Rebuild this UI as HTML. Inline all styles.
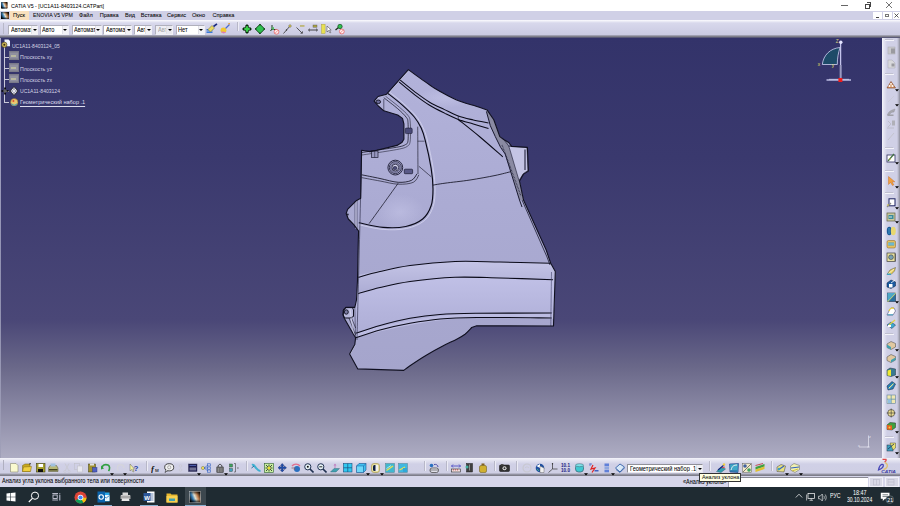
<!DOCTYPE html>
<html><head><meta charset="utf-8">
<style>
*{margin:0;padding:0;box-sizing:border-box}
html,body{width:900px;height:506px;overflow:hidden;background:#fff;font-family:"Liberation Sans",sans-serif;}
.a{position:absolute}
#title{left:0;top:0;width:900px;height:11px;background:#fff}
#menu{left:0;top:11px;width:900px;height:9px;background:#d0d0e6}
#tb{left:0;top:20px;width:900px;height:18px;background:linear-gradient(#fbfbfe 0px,#f0f0f8 1px,#d8d8ec 3px,#d0d0e6 10px,#cbcbe2 14.5px,#9c9cac 15.6px,#76767f 16.8px,#5a5a78 17.5px,#3c3c6c 18px)}
#vp{left:0;top:38px;width:882px;height:420px;background:linear-gradient(#33336a 0px,#3a396e 119px,#4a4777 282px,#6a6889 329px,#aeadc3 420px)}
#rtb{left:882px;top:37.5px;width:18px;height:420.5px;background:linear-gradient(90deg,#f4f4fa 0px,#e4e4f2 2px,#d0d0e6 5px,#d0d0e6 15px,#a8a8b8 17px,#8a8a96 18px)}
#btb{left:0;top:458px;width:900px;height:18px;background:linear-gradient(#f4f4fa 0px,#e6e6f2 2px,#d0d0e6 6px,#cfcfe4 15px,#9c9cac 16px,#74747e 18px)}
#stat{left:0;top:476px;width:900px;height:11px;background:#d6d6ea}
#task{left:0;top:487px;width:900px;height:19px;background:#1f2b32}
.t{position:absolute;white-space:nowrap;line-height:1;color:#000;font-size:5.6px;-webkit-text-stroke:0.04px currentColor}
</style></head><body>
<div id="title" class="a"></div>
<div id="menu" class="a"></div>
<div id="tb" class="a"></div>
<div id="vp" class="a"></div>
<div id="rtb" class="a"></div>
<div class="a" style="left:0;top:38px;width:1px;height:420px;background:linear-gradient(#a8a8c8,#9090b0 60%,#a0a0b8)"></div>
<div id="btb" class="a"></div>
<div id="stat" class="a"></div>
<div id="task" class="a"></div>
<!--CHROME-->
<!-- title bar -->
<svg class="a" style="left:1.4px;top:2px" width="6.6" height="6.5" viewBox="0 0 10 10"><defs><linearGradient id="cic" x1="0" y1="0.7" x2="1" y2="0.3"><stop offset="0" stop-color="#000"/><stop offset="0.3" stop-color="#3a80b8"/><stop offset="0.5" stop-color="#e0e0d0"/><stop offset="0.72" stop-color="#c08050"/><stop offset="1" stop-color="#100800"/></linearGradient><linearGradient id="cic2" x1="0" y1="0" x2="0" y2="1"><stop offset="0" stop-color="#000" stop-opacity="0.6"/><stop offset="0.3" stop-color="#000" stop-opacity="0"/><stop offset="0.7" stop-color="#000" stop-opacity="0"/><stop offset="1" stop-color="#000" stop-opacity="0.8"/></linearGradient></defs><rect width="10" height="10" rx="1" fill="url(#cic)"/><rect width="10" height="10" rx="1" fill="url(#cic2)"/></svg>
<div class="t" style="left:11px;top:3.5px;font-size:5.9px;color:#000;transform:scaleX(0.89);transform-origin:0 0">CATIA V5 - [UC1A11-8403124.CATPart]</div>
<div class="a" style="left:841px;top:5px;width:7px;height:1px;background:#666"></div>
<div class="a" style="left:864.5px;top:3.5px;width:5px;height:5px;border:0.8px solid #444"></div>
<div class="a" style="left:866.5px;top:1.8px;width:4.8px;height:4.8px;border-top:0.8px solid #444;border-right:0.8px solid #444"></div>
<svg class="a" style="left:885px;top:1px" width="8" height="8" viewBox="0 0 8 8"><path d="M1,1 L7,7 M7,1 L1,7" stroke="#444" stroke-width="0.75"/></svg>
<!-- menu bar -->
<svg class="a" style="left:1px;top:12px" width="8" height="7" viewBox="0 0 10 10" preserveAspectRatio="none"><rect width="10" height="10" fill="url(#cic)"/><rect width="10" height="10" fill="url(#cic2)"/></svg>
<div class="a" style="left:10px;top:11px;width:19px;height:9px;background:#f9e0bd"></div>
<div class="t" style="left:13px;top:13.2px;color:#000">Пуск</div>
<div class="t" style="left:32.5px;top:13.2px;color:#000;transform:scaleX(0.93);transform-origin:0 0">ENOVIA V5 VPM</div>
<div class="t" style="left:79px;top:13.2px;color:#000">Файл</div>
<div class="t" style="left:99.7px;top:13.2px;color:#000">Правка</div>
<div class="t" style="left:125px;top:13.2px;color:#000">Вид</div>
<div class="t" style="left:140.8px;top:13.2px;color:#000">Вставка</div>
<div class="t" style="left:167px;top:13.2px;color:#000">Сервис</div>
<div class="t" style="left:192px;top:13.2px;color:#000">Окно</div>
<div class="t" style="left:212.5px;top:13.2px;color:#000">Справка</div>
<div class="a" style="left:873px;top:12px;width:9px;height:7px;background:#fff"></div>
<div class="a" style="left:876px;top:17px;width:3px;height:1px;background:#444"></div>
<div class="a" style="left:883px;top:12px;width:9px;height:7px;background:#fff"></div>
<div class="a" style="left:885px;top:14px;width:4px;height:3px;border:1px solid #777"></div>
<div class="a" style="left:893px;top:12px;width:7px;height:7px;background:#fff"></div>
<svg class="a" style="left:894px;top:13px" width="5" height="5" viewBox="0 0 5 5"><path d="M0.5,0.5 L4.5,4.5 M4.5,0.5 L0.5,4.5" stroke="#333" stroke-width="0.8"/></svg>
<!-- toolbar -->
<div class="a" style="left:3px;top:23px;width:1px;height:11px;background:#b8b8c8"></div>
<style>
.cb{position:absolute;top:24.5px;height:10px;background:#fff;border:1px solid #b0b0bc;border-right-color:#f0f0f6;border-bottom-color:#f0f0f6}
.cb i{position:absolute;right:0;top:0;width:6px;height:8px;background:#f2f2f6;border-left:1px solid #e0e0e8}
.cb i:after{content:"";position:absolute;left:0.5px;top:3px;border-left:2.5px solid transparent;border-right:2.5px solid transparent;border-top:2.5px solid #000}
.cb b{position:absolute;left:1.5px;top:1.2px;font-weight:normal;font-size:6.5px;line-height:1;color:#000;-webkit-text-stroke:0.04px #000;white-space:nowrap;overflow:hidden;transform:scaleX(0.87);transform-origin:0 0}
</style>
<div class="cb" style="left:8px;width:30px"><b style="width:25px">Автомат</b><i></i></div>
<div class="cb" style="left:39.5px;width:29px"><b style="width:25px">Авто</b><i></i></div>
<div class="cb" style="left:71.5px;width:30px"><b style="width:25px">Автомат</b><i></i></div>
<div class="cb" style="left:103px;width:29px"><b style="width:25px">Автомат</b><i></i></div>
<div class="cb" style="left:134px;width:18px"><b style="width:12px">Авто</b><i></i></div>
<div class="cb" style="left:155px;width:18px;background:#eeeef4"><b style="width:12px;color:#aaa">Авто</b><i style="background:#e8e8ee"></i></div>
<div class="cb" style="left:175.5px;width:29px"><b style="width:25px">Нет</b><i></i></div>
<svg class="a" style="left:206px;top:23px" width="12" height="11" viewBox="0 0 12 11">
<rect x="0.5" y="6" width="6" height="1.6" fill="#3a7ad8"/><rect x="0.5" y="8.4" width="6" height="1.6" fill="#3a7ad8"/>
<path d="M2,6.5 L6,2.5 L8.5,5 L4.5,9 Z" fill="#e8d860" stroke="#6a6a30" stroke-width="0.5"/>
<path d="M7.5,3.5 L11,0.8" stroke="#1a2a80" stroke-width="1.6"/></svg>
<svg class="a" style="left:220px;top:23px" width="11" height="11" viewBox="0 0 11 11">
<path d="M5,6 L9.5,1.5" stroke="#4a6ad0" stroke-width="1.2"/><path d="M8,1 L10,0.5" stroke="#e0a040" stroke-width="1"/>
<circle cx="3.5" cy="7.3" r="2.9" fill="#f2c830"/><path d="M1,8.5 A2.9,2.9 0 0 0 6,9" fill="#d878c0"/></svg>
<div class="a" style="left:237px;top:22px;width:1px;height:9px;background:#b8b8c8"></div>
<div class="a" style="left:238px;top:22px;width:1px;height:9px;background:#ececf6"></div>
<svg class="a" style="left:242px;top:23.5px" width="10" height="10" viewBox="0 0 10 10"><path d="M5,1.5 L5,8.5 M1.5,5 L8.5,5" stroke="#062a08" stroke-width="3.2"/><path d="M5,2 L5,8 M2,5 L8,5" stroke="#38d048" stroke-width="2"/><path d="M5,0 L7,2.3 L3,2.3 Z M5,10 L7,7.7 L3,7.7 Z M0,5 L2.3,3 L2.3,7 Z M10,5 L7.7,3 L7.7,7 Z" fill="#062a08"/></svg>
<svg class="a" style="left:255px;top:23.5px" width="10" height="10" viewBox="0 0 10 10"><path d="M5,0.3 L9.7,5 L5,9.7 L0.3,5 Z" fill="#30c050" stroke="#0a3a10" stroke-width="0.9"/><circle cx="5" cy="0.8" r="0.8" fill="#0a3a10"/><circle cx="9.2" cy="5" r="0.8" fill="#0a3a10"/><circle cx="5" cy="9.2" r="0.8" fill="#0a3a10"/><circle cx="0.8" cy="5" r="0.8" fill="#0a3a10"/></svg>
<svg class="a" style="left:270px;top:23.5px" width="10" height="11" viewBox="0 0 10 11"><path d="M2,1 L2,5 L7,6 M2,5 L0.5,7" stroke="#1a3a1a" stroke-width="1" fill="none"/><path d="M1,4 L4,3 L4,6 Z" fill="#50c060"/><circle cx="6.5" cy="7.8" r="2.4" fill="#fff0f0" stroke="#e85858" stroke-width="0.7"/><path d="M4.9,9.4 L8.1,6.2" stroke="#e85858" stroke-width="0.6"/></svg>
<svg class="a" style="left:283px;top:24px" width="9" height="10" viewBox="0 0 9 10"><path d="M0.5,9.5 L7,2" stroke="#333" stroke-width="0.8"/><path d="M5.5,2 L7,0.5 L8.5,2 L7,3.5 Z" fill="#d8c840" stroke="#555" stroke-width="0.5"/><circle cx="3.5" cy="6" r="0.7" fill="#333"/></svg>
<svg class="a" style="left:296px;top:24px" width="9" height="10" viewBox="0 0 9 10"><path d="M0.5,3.5 L6,9" stroke="#333" stroke-width="0.8"/><path d="M4.5,9.3 L6.5,9.3 L6.5,7.3" stroke="#333" stroke-width="0.7" fill="none"/><rect x="4" y="1.2" width="4.5" height="1.5" fill="#b8b060"/></svg>
<svg class="a" style="left:308px;top:24px" width="10" height="10" viewBox="0 0 10 10"><rect x="5" y="1" width="4" height="2.2" fill="#a8a040" stroke="#555" stroke-width="0.4"/><path d="M0.5,6 L9.5,6" stroke="#333" stroke-width="0.9"/><path d="M2,4.6 L0.5,6 L2,7.4 M8,4.6 L9.5,6 L8,7.4" stroke="#333" stroke-width="0.7" fill="none"/></svg>
<svg class="a" style="left:320.5px;top:24px" width="11" height="10" viewBox="0 0 11 10"><rect x="0.5" y="0.3" width="3.6" height="9.2" fill="#e8e050" stroke="#a09830" stroke-width="0.4"/><path d="M6,2 L6,8 L7.5,6.5 L9,9 L9.8,8.5 L8.5,6 L10.2,6 Z" fill="#fff" stroke="#333" stroke-width="0.5"/></svg>
<svg class="a" style="left:335px;top:24px" width="10" height="11" viewBox="0 0 10 11"><path d="M0.5,6 L3.5,3.5" stroke="#1a2a1a" stroke-width="1.2"/><circle cx="5" cy="2.5" r="2.2" fill="#30c050" stroke="#0a3a10" stroke-width="0.6"/><circle cx="6.8" cy="7.5" r="2.4" fill="#fff0f0" stroke="#e85858" stroke-width="0.7"/><path d="M5.2,9.1 L8.4,5.9" stroke="#e85858" stroke-width="0.6"/></svg>
<!-- tree -->
<div class="a" style="left:4px;top:47px;width:1px;height:56px;background:#c8c8d8"></div>
<div class="a" style="left:4px;top:57px;width:5px;height:1px;background:#c8c8d8"></div>
<div class="a" style="left:4px;top:68px;width:5px;height:1px;background:#c8c8d8"></div>
<div class="a" style="left:4px;top:79px;width:5px;height:1px;background:#c8c8d8"></div>
<div class="a" style="left:4px;top:91px;width:5px;height:1px;background:#c8c8d8"></div>
<div class="a" style="left:4px;top:102px;width:5px;height:1px;background:#c8c8d8"></div>
<svg class="a" style="left:1px;top:38.5px" width="10" height="10" viewBox="0 0 10 10"><path d="M3.5,0.5 L7.5,0.5 L9,2 L9,7.3 L3.5,7.3 Z" fill="#f0f4ff"/><circle cx="3.3" cy="5.8" r="2.7" fill="#c8b458" stroke="#302810" stroke-width="0.5"/><circle cx="3.3" cy="5.8" r="1" fill="#403010"/></svg>
<div class="t" style="left:11.7px;top:42.6px;color:#d4d4e4;-webkit-text-stroke:0;font-size:6px;transform:scaleX(0.83);transform-origin:0 0">UC1A11-8403124_05</div>
<svg class="a" style="left:9px;top:51px" width="10" height="9" viewBox="0 0 10 9"><rect x="0" y="0" width="10" height="9" fill="#7a7a8a"/><rect x="1" y="1.5" width="8" height="6" fill="#9090a0"/><rect x="2" y="4" width="5" height="2" fill="#b8b8a0"/></svg>
<div class="t" style="left:20px;top:54.3px;color:#d4d4e4;-webkit-text-stroke:0;font-size:6px;transform:scaleX(0.87);transform-origin:0 0">Плоскость xy</div>
<svg class="a" style="left:9px;top:62.5px" width="10" height="9" viewBox="0 0 10 9"><rect x="0" y="0" width="10" height="9" fill="#7a7a8a"/><rect x="1" y="1.5" width="8" height="6" fill="#9090a0"/><rect x="2" y="4" width="5" height="2" fill="#b8b8a0"/></svg>
<div class="t" style="left:20px;top:65.6px;color:#d4d4e4;-webkit-text-stroke:0;font-size:6px;transform:scaleX(0.87);transform-origin:0 0">Плоскость yz</div>
<svg class="a" style="left:9px;top:74px" width="10" height="9" viewBox="0 0 10 9"><rect x="0" y="0" width="10" height="9" fill="#7a7a8a"/><rect x="1" y="1.5" width="8" height="6" fill="#9090a0"/><rect x="2" y="4" width="5" height="2" fill="#b8b8a0"/></svg>
<div class="t" style="left:20px;top:77px;color:#d4d4e4;-webkit-text-stroke:0;font-size:6px;transform:scaleX(0.87);transform-origin:0 0">Плоскость zx</div>
<svg class="a" style="left:1px;top:86px" width="18" height="10" viewBox="0 0 18 10"><path d="M4,1.5 L4,8.5 M0.5,5 L7.5,5" stroke="#000" stroke-width="1.6"/><path d="M4,3 L4,7 M2,5 L6,5" stroke="#e0e0e0" stroke-width="0.5"/><path d="M13,0.5 L17,5 L13,9.5 L9,5 Z" fill="#b0b0c0" stroke="#222" stroke-width="0.8"/><path d="M11,3 L15,7 M15,3 L11,7" stroke="#fff" stroke-width="0.7"/></svg>
<div class="t" style="left:20px;top:88.4px;color:#d4d4e4;-webkit-text-stroke:0;font-size:6px;transform:scaleX(0.84);transform-origin:0 0">UC1A11-8403124</div>
<svg class="a" style="left:10px;top:97.5px" width="8.5" height="8.5" viewBox="0 0 10 10"><circle cx="5" cy="5" r="4.3" fill="#e8c870" stroke="#906020" stroke-width="0.6"/><path d="M1.5,6 Q5,10 8.5,6 L8,8 Q5,10 2,8 Z" fill="#40a0c0"/><circle cx="4" cy="3.5" r="1.2" fill="#e05030"/></svg>
<div class="t" style="left:20px;top:99.4px;color:#dcdcec;-webkit-text-stroke:0;font-size:6px;border-bottom:0.6px solid #dcdcec;padding-bottom:0.2px;transform:scaleX(0.93);transform-origin:0 0">Геометрический набор .1</div>
<!-- compass -->
<svg class="a" style="left:812px;top:38px" width="45" height="48" viewBox="812 38 45 48">
<path d="M822.3,64.5 C823.5,55 830,48.5 840,47.5 C838.3,53 837.3,58 837.3,64.5 Z" fill="#1d4a68" stroke="#d0d0f4" stroke-width="0.8"/>
<path d="M840.6,42 L840.6,79" stroke="#c4c4ec" stroke-width="1.3"/>
<path d="M840.6,65 L840.6,79" stroke="#9a9ac0" stroke-width="1.8"/>
<circle cx="840.8" cy="42.2" r="1.7" fill="#e4e4ff"/>
<path d="M826.5,80 L851,80" stroke="#b4b4dc" stroke-width="1.6"/>
<path d="M829,79.3 L849,79.3" stroke="#e0e0fa" stroke-width="0.6"/>
<rect x="838.4" y="78" width="4" height="4" fill="#ee1c1c"/>
<text x="835.8" y="43.2" font-size="4.6" fill="#d8d080" font-family="Liberation Sans">Z</text>
<text x="817.8" y="65.5" font-size="4.8" fill="#e8e060" font-family="Liberation Sans">x</text>
<text x="831.8" y="67.2" font-size="4.8" fill="#e8e060" font-family="Liberation Sans">y</text>
</svg>
<!-- small axis bottom right -->
<svg class="a" style="left:857px;top:433.5px" width="14" height="16" viewBox="0 0 14 16"><path d="M11.5,1.5 L11.5,13 L2,13" stroke="#e8e8f4" stroke-width="0.7" fill="none"/><path d="M10.5,12 L12.5,14 M12.5,12 L10.5,14" stroke="#e8e8f4" stroke-width="0.5"/><text x="12" y="4" font-size="3.5" fill="#e8e8f4" font-family="Liberation Sans">z</text><text x="1" y="12.5" font-size="3.5" fill="#e8e8f4" font-family="Liberation Sans">x</text></svg>
<!-- right toolbar -->
<div class="a" style="left:885px;top:39px;width:8px;height:1px;background:#c0c0d0"></div><div class="a" style="left:885px;top:40px;width:9px;height:1px;background:#f4f4fa"></div>
<svg class="a" style="left:886px;top:45.5px" width="11" height="10" viewBox="0 0 11 10"><rect x="2" y="1" width="7" height="7" fill="#c8c8cc" stroke="#a8a8b0" stroke-width="0.5"/><rect x="5" y="2.5" width="4" height="5" fill="#9a9aa0"/></svg>
<svg class="a" style="left:886px;top:58.5px" width="11" height="10" viewBox="0 0 11 10"><path d="M2,1 L6,1 L9,4 L9,9 L2,9 Z" fill="#d8d8dc" stroke="#a8a8b0" stroke-width="0.5"/><rect x="5.5" y="4.5" width="3" height="3" fill="#9a9aa0"/></svg>
<div class="a" style="left:885px;top:72.5px;width:8px;height:1px;background:#c0c0d0"></div><div class="a" style="left:885px;top:73.5px;width:9px;height:1px;background:#f4f4fa"></div>
<svg class="a" style="left:886px;top:79.5px" width="11" height="10" viewBox="0 0 11 10"><path d="M1,8 L5,1.5 L9.5,8 Z" fill="#d89868" stroke="#804020" stroke-width="0.6"/><circle cx="3.5" cy="6" r="1" fill="#fff"/><circle cx="6.5" cy="6" r="1" fill="#fff"/><circle cx="5" cy="3.8" r="0.9" fill="#fff"/></svg>
<svg class="a" style="left:895px;top:89.0px" width="4" height="3" viewBox="0 0 4 3"><path d="M0,0.3 L4,0.3 L2,2.5 Z" fill="#000"/></svg>
<svg class="a" style="left:886px;top:94px" width="11" height="10" viewBox="0 0 11 10"><path d="M2,8 L8,2" stroke="#c8c8d0" stroke-width="0.6"/></svg>
<svg class="a" style="left:895px;top:103.5px" width="4" height="3" viewBox="0 0 4 3"><path d="M0,0.3 L4,0.3 L2,2.5 Z" fill="#000"/></svg>
<svg class="a" style="left:886px;top:106.5px" width="11" height="10" viewBox="0 0 11 10"><path d="M1.5,8 C2,5 5,3 9,2 L8,5 C6,5 4,6 3.5,8 Z" fill="#a8a8b0" stroke="#909098" stroke-width="0.4"/><rect x="1.5" y="7.5" width="6" height="1.5" fill="#a0a0a8"/></svg>
<svg class="a" style="left:886px;top:119px" width="11" height="10" viewBox="0 0 11 10"><path d="M2,2 L5,5 L2,8" stroke="#b0b0b8" stroke-width="0.6" fill="none"/><rect x="6" y="1.5" width="3" height="5" fill="#b0b0b8"/><path d="M1,9 L8,9" stroke="#b0b0b8" stroke-width="0.6"/></svg>
<svg class="a" style="left:886px;top:131px" width="11" height="10" viewBox="0 0 11 10"><path d="M2,9 L8,2" stroke="#c0c0c8" stroke-width="0.8"/></svg>
<div class="a" style="left:885px;top:146.5px;width:8px;height:1px;background:#c0c0d0"></div><div class="a" style="left:885px;top:147.5px;width:9px;height:1px;background:#f4f4fa"></div>
<svg class="a" style="left:886px;top:152.5px" width="11" height="10" viewBox="0 0 11 10"><rect x="1" y="2" width="8" height="7" fill="#fff" stroke="#303060" stroke-width="0.8"/><path d="M2,8 L8,1" stroke="#407040" stroke-width="1.2"/><path d="M3,6 L5,6" stroke="#d0c040" stroke-width="0.8"/></svg>
<svg class="a" style="left:895px;top:162.0px" width="4" height="3" viewBox="0 0 4 3"><path d="M0,0.3 L4,0.3 L2,2.5 Z" fill="#000"/></svg>
<div class="a" style="left:885px;top:169.5px;width:8px;height:1px;background:#c0c0d0"></div><div class="a" style="left:885px;top:170.5px;width:9px;height:1px;background:#f4f4fa"></div>
<svg class="a" style="left:886px;top:176px" width="11" height="10" viewBox="0 0 11 10"><path d="M2.5,0.5 L2.5,8.5 L4.5,6.5 L6.5,9.5 L7.8,8.8 L6,5.8 L8.8,5.8 Z" fill="#f0a040" stroke="#c86010" stroke-width="0.4"/></svg>
<svg class="a" style="left:895px;top:185.5px" width="4" height="3" viewBox="0 0 4 3"><path d="M0,0.3 L4,0.3 L2,2.5 Z" fill="#000"/></svg>
<div class="a" style="left:885px;top:192px;width:8px;height:1px;background:#c0c0d0"></div><div class="a" style="left:885px;top:193px;width:9px;height:1px;background:#f4f4fa"></div>
<svg class="a" style="left:886px;top:197.5px" width="11" height="10" viewBox="0 0 11 10"><rect x="3" y="0.8" width="6" height="7" fill="#fff" stroke="#1a2060" stroke-width="1"/><path d="M1,9 L5,5" stroke="#888" stroke-width="1.2"/><path d="M1,7 L3,7" stroke="#d0c040" stroke-width="1"/></svg>
<svg class="a" style="left:895px;top:207.0px" width="4" height="3" viewBox="0 0 4 3"><path d="M0,0.3 L4,0.3 L2,2.5 Z" fill="#000"/></svg>
<svg class="a" style="left:886px;top:211.5px" width="11" height="10" viewBox="0 0 11 10"><rect x="1" y="1" width="8" height="8" fill="#c8c8a0" stroke="#606040" stroke-width="0.7"/><rect x="2.5" y="3" width="5" height="4" fill="#3a8a9a"/><path d="M3,5 L6,5" stroke="#fff" stroke-width="0.8"/></svg>
<svg class="a" style="left:895px;top:221.0px" width="4" height="3" viewBox="0 0 4 3"><path d="M0,0.3 L4,0.3 L2,2.5 Z" fill="#000"/></svg>
<svg class="a" style="left:886px;top:225.5px" width="11" height="10" viewBox="0 0 11 10"><ellipse cx="3.3" cy="5" rx="2.5" ry="4.2" fill="#1a5a9a"/><ellipse cx="7.3" cy="5" rx="2.5" ry="4.2" fill="#e8d870"/><path d="M3,2 L3,8" stroke="#60c0e0" stroke-width="0.6"/></svg>
<svg class="a" style="left:886px;top:238.5px" width="11" height="10" viewBox="0 0 11 10"><rect x="1" y="1.5" width="8.5" height="7.5" rx="1.5" fill="#e8c060" stroke="#806020" stroke-width="0.5"/><rect x="2.2" y="3.5" width="6" height="3" fill="#40a0c0"/><path d="M2,5 L8,5" stroke="#fff" stroke-width="0.5"/></svg>
<svg class="a" style="left:886px;top:252px" width="11" height="10" viewBox="0 0 11 10"><rect x="1" y="1" width="8" height="8.5" fill="#e8e0a0" stroke="#404040" stroke-width="0.7"/><circle cx="5" cy="5.2" r="2.4" fill="#7aa0b0" stroke="#303030" stroke-width="0.5"/><path d="M9,1 L10,2 L10,9.5 L9,9.5" fill="#606060"/></svg>
<svg class="a" style="left:886px;top:265.5px" width="11" height="10" viewBox="0 0 11 10"><path d="M1,8.5 L4,4 L9.5,1.5 L8.5,5 L5,8.5 Z" fill="#e8d060" stroke="#505030" stroke-width="0.5"/><path d="M2,8 L8,3" stroke="#fff" stroke-width="0.6"/><rect x="1" y="7.5" width="4" height="1.5" fill="#40a0c0"/></svg>
<svg class="a" style="left:886px;top:278.5px" width="11" height="10" viewBox="0 0 11 10"><path d="M1,4 L5,1 L9.5,3 L9.5,7 L5,9.5 L1,8 Z" fill="#1a5aa0" stroke="#102040" stroke-width="0.5"/><rect x="3" y="5" width="3.5" height="3.5" fill="#fff"/><path d="M5,4 L9,1" stroke="#fff" stroke-width="0.8"/></svg>
<svg class="a" style="left:886px;top:291.5px" width="11" height="10" viewBox="0 0 11 10"><rect x="1.5" y="1" width="8" height="8.5" fill="#2a70a0" stroke="#102040" stroke-width="0.5"/><path d="M1.5,9.5 L9.5,1" fill="none" stroke="#e8d860" stroke-width="1.2"/><path d="M1.5,1 L9.5,1 L1.5,9.5 Z" fill="#50a8c8"/></svg>
<svg class="a" style="left:895px;top:301.0px" width="4" height="3" viewBox="0 0 4 3"><path d="M0,0.3 L4,0.3 L2,2.5 Z" fill="#000"/></svg>
<svg class="a" style="left:886px;top:306px" width="11" height="10" viewBox="0 0 11 10"><path d="M1,9 L3,5 C4,2 6,1 8,2 L9.5,5 L7,9 Z" fill="#fff" stroke="#303060" stroke-width="0.5"/><path d="M3,5 C4,2 6,1.5 8,2.5" stroke="#e8d040" stroke-width="1.3" fill="none"/><path d="M1.5,8.8 L7,8.8" stroke="#40a0c0" stroke-width="1"/></svg>
<svg class="a" style="left:886px;top:319px" width="11" height="10" viewBox="0 0 11 10"><path d="M1,6 L5,3 L9.5,6 L6,9.5 Z" fill="#40a8d0" stroke="#203050" stroke-width="0.5"/><path d="M3,6 L9,1" stroke="#e0d040" stroke-width="1.2"/><rect x="2" y="6" width="3" height="2" fill="#fff"/></svg>
<div class="a" style="left:885px;top:333px;width:8px;height:1px;background:#c0c0d0"></div><div class="a" style="left:885px;top:334px;width:9px;height:1px;background:#f4f4fa"></div>
<svg class="a" style="left:886px;top:339.5px" width="11" height="10" viewBox="0 0 11 10"><path d="M1,4 L5,1.5 L9.5,3.5 L9.5,7 L5,9.5 L1,7.5 Z" fill="#e0c8a0" stroke="#404040" stroke-width="0.5"/><path d="M1,4.5 L5,7 L5,9.5 L1,7.5 Z" fill="#40a0b0"/></svg>
<svg class="a" style="left:895px;top:349.0px" width="4" height="3" viewBox="0 0 4 3"><path d="M0,0.3 L4,0.3 L2,2.5 Z" fill="#000"/></svg>
<svg class="a" style="left:886px;top:353px" width="11" height="10" viewBox="0 0 11 10"><path d="M1,4 L5,1.5 L9.5,3.5 L9.5,7 L5,9.5 L1,7.5 Z" fill="#e0c8a0" stroke="#404040" stroke-width="0.5"/><path d="M5,7 L9.5,4.5 L9.5,7 L5,9.5 Z" fill="#40a0b0"/></svg>
<svg class="a" style="left:886px;top:366.5px" width="11" height="10" viewBox="0 0 11 10"><path d="M1,3 L4,1 L9.5,2 L9.5,8 L5,9.5 L1,8.5 Z" fill="#3a7a90" stroke="#203040" stroke-width="0.5"/><path d="M1.5,3.5 L5,2.5 L5,9 L1.5,8.5 Z" fill="#f0e830"/></svg>
<svg class="a" style="left:895px;top:376.0px" width="4" height="3" viewBox="0 0 4 3"><path d="M0,0.3 L4,0.3 L2,2.5 Z" fill="#000"/></svg>
<svg class="a" style="left:886px;top:380.5px" width="11" height="10" viewBox="0 0 11 10"><path d="M2,9 L1,5 L6,0.5 L9.5,3 L7,8 Z" fill="#2a80b0" stroke="#102040" stroke-width="0.5"/><path d="M3,7 L7.5,2.5" stroke="#e0e060" stroke-width="1"/><path d="M2.5,8 L7,3.5" stroke="#fff" stroke-width="0.5"/></svg>
<svg class="a" style="left:886px;top:394px" width="11" height="10" viewBox="0 0 11 10"><rect x="1" y="1" width="8.5" height="8.5" fill="#f0e8b0" stroke="#6080a0" stroke-width="0.6"/><path d="M5.2,1 L5.2,9.5 M1,5.2 L9.5,5.2" stroke="#6090b0" stroke-width="0.8"/><rect x="1.5" y="5.5" width="3.5" height="3.5" fill="#90c0e0"/></svg>
<svg class="a" style="left:886px;top:407.5px" width="11" height="10" viewBox="0 0 11 10"><circle cx="5.2" cy="5" r="3.5" fill="#f0e090" stroke="#404040" stroke-width="0.7"/><path d="M5.2,0.5 L5.2,9.5 M0.7,5 L9.7,5" stroke="#303030" stroke-width="0.6"/></svg>
<svg class="a" style="left:886px;top:421px" width="11" height="10" viewBox="0 0 11 10"><path d="M1,4 L4,1.5 L9.5,2 L9.5,6.5 L6,9 L1,8.5 Z" fill="#40a040" stroke="#203020" stroke-width="0.5"/><path d="M1,4 L6,4.5 L6,9 L1,8.5 Z" fill="#e86020"/><circle cx="3.5" cy="6.5" r="1" fill="#f0d040"/></svg>
<svg class="a" style="left:895px;top:430.5px" width="4" height="3" viewBox="0 0 4 3"><path d="M0,0.3 L4,0.3 L2,2.5 Z" fill="#000"/></svg>
<div class="a" style="left:885px;top:436px;width:8px;height:1px;background:#c0c0d0"></div><div class="a" style="left:885px;top:437px;width:9px;height:1px;background:#f4f4fa"></div>
<svg class="a" style="left:886px;top:442px" width="11" height="10" viewBox="0 0 11 10"><rect x="1" y="3" width="6" height="6" fill="#40a0c0" stroke="#203040" stroke-width="0.5"/><path d="M4,1 L9.5,1 L9.5,6 L7,8 Z" fill="#e8e070" stroke="#505030" stroke-width="0.5"/><path d="M2,7 L8,2" stroke="#1a3060" stroke-width="0.8"/></svg>
<svg class="a" style="left:895px;top:451.5px" width="4" height="3" viewBox="0 0 4 3"><path d="M0,0.3 L4,0.3 L2,2.5 Z" fill="#000"/></svg>
<!-- bottom toolbar -->
<div class="a" style="left:3px;top:460px;width:1px;height:10px;background:#b0b0c0"></div>
<svg class="a" style="left:9.5px;top:463px" width="10" height="10" viewBox="0 0 10 10"><path d="M0.5,0.5 L6,0.5 L8,2.5 L8,9 L0.5,9 Z" fill="#fafad0" stroke="#888870" stroke-width="0.6"/></svg>
<svg class="a" style="left:21.5px;top:463px" width="10" height="10" viewBox="0 0 10 10"><path d="M0.5,2.5 L3,1 L8,1 L8,8.5 L0.5,8.5 Z" fill="#c8a820" stroke="#706010" stroke-width="0.5"/><path d="M1.5,4 L9.5,3.5 L8.5,8.5 L0.5,8.5 Z" fill="#f0d040" stroke="#806810" stroke-width="0.5"/><path d="M7,1 L9,0.5" stroke="#303030" stroke-width="0.8"/></svg>
<svg class="a" style="left:35.5px;top:463px" width="10" height="10" viewBox="0 0 10 10"><rect x="0.5" y="0.5" width="8.5" height="8.5" fill="#a8a030" stroke="#404010" stroke-width="0.6"/><rect x="2.5" y="1" width="4.5" height="3" fill="#fff"/><rect x="2" y="6" width="5" height="3" fill="#101010"/></svg>
<svg class="a" style="left:47.5px;top:463px" width="11" height="10" viewBox="0 0 11 10"><path d="M0.5,5 L2,2.5 L8.5,2.5 L10,5 L10,8.5 L0.5,8.5 Z" fill="#b8b878" stroke="#505030" stroke-width="0.5"/><rect x="2.5" y="0.5" width="5" height="3" fill="#a0c0e0"/><rect x="1" y="6" width="8.5" height="1.5" fill="#404020"/></svg>
<svg class="a" style="left:62.5px;top:463px" width="10" height="10" viewBox="0 0 10 10"><path d="M2,0.5 L6,8 M6,0.5 L2,8" stroke="#c8c8d0" stroke-width="0.8"/><circle cx="2" cy="8.5" r="1.2" fill="none" stroke="#c8c8d0" stroke-width="0.6"/><circle cx="6" cy="8.5" r="1.2" fill="none" stroke="#c8c8d0" stroke-width="0.6"/></svg>
<svg class="a" style="left:74px;top:463px" width="10" height="10" viewBox="0 0 10 10"><rect x="0.5" y="0.5" width="5" height="6" fill="none" stroke="#c0c0c8" stroke-width="0.6"/><rect x="3.5" y="3" width="5" height="6" fill="#e8e8f0" stroke="#c0c0c8" stroke-width="0.6"/></svg>
<svg class="a" style="left:88px;top:463px" width="10" height="10" viewBox="0 0 10 10"><rect x="0.5" y="1" width="7" height="8" fill="#a09030" stroke="#404010" stroke-width="0.5"/><rect x="2" y="0.5" width="4" height="2" fill="#e0e0e0"/><rect x="4.5" y="4.5" width="4.5" height="4.5" fill="#5060c0" stroke="#203080" stroke-width="0.4"/></svg>
<svg class="a" style="left:100.5px;top:463px" width="10" height="10" viewBox="0 0 10 10"><path d="M1,5 C1,2 4,1 7,2 C9,3 9,6 7.5,8" stroke="#30a040" stroke-width="1.6" fill="none"/><path d="M0,2.5 L3,5.5 L0,6.5 Z" fill="#30a040"/></svg>
<svg class="a" style="left:110px;top:472.5px" width="4" height="3" viewBox="0 0 4 3"><path d="M0,0.3 L4,0.3 L2,2.5 Z" fill="#000"/></svg>
<svg class="a" style="left:115.5px;top:463px" width="10" height="10" viewBox="0 0 10 10"><path d="M8,5 C8,2 5,1 3,2 C1,3 1,6 2.5,8" stroke="#d4d4dc" stroke-width="1.4" fill="none"/></svg>
<svg class="a" style="left:123px;top:472.5px" width="4" height="3" viewBox="0 0 4 3"><path d="M0,0.3 L4,0.3 L2,2.5 Z" fill="#000"/></svg>
<svg class="a" style="left:128.5px;top:463px" width="10" height="10" viewBox="0 0 10 10"><path d="M1,1 L1,8 L2.5,6.5 L4,9 L5,8.5 L3.8,6 L5.5,6 Z" fill="#f0f0a0" stroke="#505050" stroke-width="0.4"/><text x="4.5" y="8" font-size="8" font-weight="bold" fill="#1a3aa0" font-family="Liberation Sans">?</text></svg>
<div class="a" style="left:146px;top:461px;width:1px;height:10px;background:#b8b8c8"></div><div class="a" style="left:147px;top:461px;width:1px;height:10px;background:#ececf6"></div>
<svg class="a" style="left:150.5px;top:463px" width="10" height="10" viewBox="0 0 10 10"><text x="0" y="8.5" font-size="8.5" font-style="italic" font-weight="bold" fill="#111" font-family="Liberation Serif">f</text><text x="4" y="9" font-size="5.5" fill="#111" font-family="Liberation Sans">м</text></svg>
<svg class="a" style="left:164px;top:463px" width="11" height="10" viewBox="0 0 11 10"><ellipse cx="5.2" cy="4.3" rx="4.5" ry="3.6" fill="#f0f0f0" stroke="#202020" stroke-width="0.8"/><path d="M2,7 L1,9.5 L4,7.5" fill="#f0f0f0" stroke="#202020" stroke-width="0.6"/><circle cx="5.2" cy="4.3" r="1.6" fill="none" stroke="#707070" stroke-width="0.5"/></svg>
<svg class="a" style="left:178px;top:463px" width="5" height="10" viewBox="0 0 5 10"><circle cx="2.5" cy="3" r="1.3" fill="none" stroke="#c8c8d0" stroke-width="0.6"/><circle cx="2.5" cy="7" r="1.3" fill="none" stroke="#c8c8d0" stroke-width="0.6"/></svg>
<svg class="a" style="left:187.5px;top:463px" width="10" height="10" viewBox="0 0 10 10"><rect x="0.5" y="1" width="8.5" height="7.5" fill="#1a1a50" stroke="#404060" stroke-width="0.5"/><rect x="1.5" y="4.5" width="6.5" height="3" fill="#707090"/><path d="M1.5,2.5 L8,2.5" stroke="#5a70c0" stroke-width="0.8"/></svg>
<svg class="a" style="left:196.5px;top:472.5px" width="4" height="3" viewBox="0 0 4 3"><path d="M0,0.3 L4,0.3 L2,2.5 Z" fill="#000"/></svg>
<svg class="a" style="left:201px;top:463px" width="10" height="10" viewBox="0 0 10 10"><circle cx="2" cy="5" r="1.6" fill="#f0e060" stroke="#606020" stroke-width="0.4"/><path d="M3,5 L7,2 M3,5 L7,5 M3,5 L7,8" stroke="#3060c0" stroke-width="0.6"/><rect x="6.5" y="0.8" width="3" height="2.2" fill="none" stroke="#3060c0" stroke-width="0.6"/><rect x="6.5" y="4" width="3" height="2.2" fill="none" stroke="#3060c0" stroke-width="0.6"/><rect x="6.5" y="7" width="3" height="2.2" fill="none" stroke="#3060c0" stroke-width="0.6"/></svg>
<svg class="a" style="left:216px;top:463px" width="8" height="10" viewBox="0 0 8 10"><path d="M2,4 C2,0.5 6,0.5 6,4" stroke="#404040" stroke-width="1" fill="none"/><rect x="0.8" y="4" width="6.5" height="5.5" fill="#707070" stroke="#303030" stroke-width="0.5"/><path d="M2.5,5 L2.5,9 M5,5 L5,9" stroke="#a0a0a0" stroke-width="0.6"/></svg>
<svg class="a" style="left:224px;top:472.5px" width="4" height="3" viewBox="0 0 4 3"><path d="M0,0.3 L4,0.3 L2,2.5 Z" fill="#000"/></svg>
<svg class="a" style="left:228.5px;top:463px" width="10" height="10" viewBox="0 0 10 10"><rect x="0.5" y="1" width="3" height="3" fill="#40a060" stroke="#304030" stroke-width="0.4"/><rect x="0.5" y="5.5" width="3" height="3" fill="#40a0c0" stroke="#304030" stroke-width="0.4"/><path d="M5,0.5 L6.5,0.5 L6.5,9 L5,9" stroke="#404040" stroke-width="0.6" fill="none"/><rect x="8.3" y="4.5" width="1.2" height="1" fill="#404040"/></svg>
<div class="a" style="left:245.5px;top:461px;width:1px;height:10px;background:#b8b8c8"></div><div class="a" style="left:246.5px;top:461px;width:1px;height:10px;background:#ececf6"></div>
<svg class="a" style="left:250.5px;top:463px" width="10" height="10" viewBox="0 0 10 10"><path d="M1,2 C3,1 4,4 5,5 C6,6 7,8 9.5,8" stroke="#40b0d0" stroke-width="2" fill="none"/><path d="M0.5,5 L3,3" stroke="#2070a0" stroke-width="1"/></svg>
<svg class="a" style="left:264px;top:463px" width="10" height="10" viewBox="0 0 10 10"><rect x="0.5" y="0.5" width="9" height="9" fill="#c8f0a0" stroke="#306030" stroke-width="0.6"/><path d="M2,2 L8,8 M8,2 L2,8 M5,1.5 L5,8.5 M1.5,5 L8.5,5" stroke="#202020" stroke-width="0.8"/><circle cx="5" cy="5" r="1.5" fill="#e8e030"/></svg>
<svg class="a" style="left:277.5px;top:463px" width="9" height="10" viewBox="0 0 9 10"><path d="M4.2,0.5 L6,2.5 L5,2.5 L5,4 L6.5,4 L6.5,3 L8.5,4.8 L6.5,6.5 L6.5,5.5 L5,5.5 L5,7 L6,7 L4.2,9 L2.5,7 L3.5,7 L3.5,5.5 L2,5.5 L2,6.5 L0,4.8 L2,3 L2,4 L3.5,4 L3.5,2.5 L2.5,2.5 Z" fill="#2050b0" stroke="#102060" stroke-width="0.4"/></svg>
<svg class="a" style="left:290.5px;top:463px" width="10" height="10" viewBox="0 0 10 10"><path d="M1,3 C3,0.5 7,0.5 9,3" stroke="#e07090" stroke-width="1.3" fill="none"/><circle cx="6" cy="6" r="3" fill="#2a70c0"/><path d="M0.5,5 L4,5 L3,7" stroke="#806070" stroke-width="0.8" fill="none"/></svg>
<svg class="a" style="left:303.5px;top:463px" width="10" height="10" viewBox="0 0 10 10"><circle cx="3.8" cy="3.8" r="3.1" fill="#e8f4f8" stroke="#203050" stroke-width="1"/><circle cx="3.8" cy="3.8" r="1" fill="#101010"/><path d="M6,6 L9.5,9.5" stroke="#203050" stroke-width="1.6"/></svg>
<svg class="a" style="left:316.5px;top:463px" width="10" height="10" viewBox="0 0 10 10"><circle cx="3.8" cy="3.8" r="3.1" fill="#e8f4f8" stroke="#203050" stroke-width="1"/><path d="M2.3,3.8 L5.3,3.8" stroke="#101010" stroke-width="0.9"/><path d="M6,6 L9.5,9.5" stroke="#203050" stroke-width="1.6"/></svg>
<svg class="a" style="left:330px;top:463px" width="10" height="10" viewBox="0 0 10 10"><path d="M0.5,9 L4,5.5 L9.5,5.5 L6,9 Z" fill="#40a0b0" stroke="#306070" stroke-width="0.4"/><path d="M5,5 L5,1.5" stroke="#c080c0" stroke-width="1"/><path d="M3.5,2.5 L5,0.5 L6.5,2.5 Z" fill="#c080c0"/></svg>
<svg class="a" style="left:343px;top:463px" width="10" height="10" viewBox="0 0 10 10"><rect x="0.5" y="0.5" width="8.5" height="8.5" fill="#30c8f0" stroke="#1a5080" stroke-width="0.6"/><path d="M4.75,0.5 L4.75,9 M0.5,4.75 L9,4.75" stroke="#1a5080" stroke-width="0.7"/></svg>
<svg class="a" style="left:355.5px;top:463px" width="11" height="10" viewBox="0 0 11 10"><path d="M0.5,3 L3,0.5 L10,0.5 L10,7 L7.5,9.5 L0.5,9.5 Z" fill="#40c0f0" stroke="#1a5090" stroke-width="0.6"/><path d="M0.5,3 L7.5,3 L10,0.5 M7.5,3 L7.5,9.5" stroke="#1a5090" stroke-width="0.5" fill="none"/><rect x="1" y="3.5" width="6" height="5.5" fill="#70d8f8"/></svg>
<svg class="a" style="left:366px;top:472.5px" width="4" height="3" viewBox="0 0 4 3"><path d="M0,0.3 L4,0.3 L2,2.5 Z" fill="#000"/></svg>
<svg class="a" style="left:371px;top:463px" width="9" height="10" viewBox="0 0 9 10"><rect x="0.5" y="0.5" width="8" height="9" rx="2.5" fill="#e8e0a0" stroke="#a09040" stroke-width="0.6"/><rect x="2" y="2" width="5" height="6" rx="1.5" fill="#102040"/><rect x="4.5" y="2" width="2.5" height="6" fill="#f0f0f0"/></svg>
<svg class="a" style="left:379.5px;top:472.5px" width="4" height="3" viewBox="0 0 4 3"><path d="M0,0.3 L4,0.3 L2,2.5 Z" fill="#000"/></svg>
<svg class="a" style="left:384.5px;top:463px" width="10" height="10" viewBox="0 0 10 10"><rect x="0.5" y="0.5" width="9" height="9" fill="#40b8d0" stroke="#5a8090" stroke-width="0.5"/><path d="M1.5,7.5 L8,3" stroke="#e8e050" stroke-width="1.4"/><path d="M1.5,5.5 L6,2.5" stroke="#fff" stroke-width="0.6"/></svg>
<svg class="a" style="left:397.5px;top:463px" width="10" height="10" viewBox="0 0 10 10"><rect x="0.5" y="0.5" width="9" height="9" fill="#40b8e0" stroke="#5a8090" stroke-width="0.5"/><path d="M1.5,7 L7,4" stroke="#e8e050" stroke-width="1.4"/><rect x="5" y="5" width="4" height="4" fill="#30a8d8"/></svg>
<div class="a" style="left:424px;top:461px;width:1px;height:10px;background:#b8b8c8"></div><div class="a" style="left:425px;top:461px;width:1px;height:10px;background:#ececf6"></div>
<svg class="a" style="left:428.5px;top:463px" width="10" height="10" viewBox="0 0 10 10"><circle cx="2.5" cy="2.5" r="1.8" fill="#2a70c0"/><path d="M5,1.5 C7,1 9,2 9,4" stroke="#4040a0" stroke-width="0.9" fill="none"/><rect x="1" y="5" width="8.5" height="4.5" rx="2" fill="#e0e0e8" stroke="#404040" stroke-width="0.7"/><path d="M1,7 L9.5,7" stroke="#404040" stroke-width="0.6"/></svg>
<div class="a" style="left:446px;top:461px;width:1px;height:10px;background:#b8b8c8"></div><div class="a" style="left:447px;top:461px;width:1px;height:10px;background:#ececf6"></div>
<svg class="a" style="left:451px;top:463px" width="10" height="10" viewBox="0 0 10 10"><path d="M0.5,3 L9.5,3" stroke="#4040c0" stroke-width="0.8"/><path d="M2,1.5 L0.5,3 L2,4.5 M8,1.5 L9.5,3 L8,4.5" stroke="#4040c0" stroke-width="0.8" fill="none"/><rect x="0.5" y="6" width="9" height="3" fill="#f0e0e0" stroke="#303030" stroke-width="0.6"/><path d="M2.5,6 L2.5,7.5 M4.5,6 L4.5,7.5 M6.5,6 L6.5,7.5" stroke="#c03030" stroke-width="0.6"/></svg>
<svg class="a" style="left:465px;top:463px" width="8" height="10" viewBox="0 0 8 10"><rect x="1.5" y="0.5" width="6" height="8.5" fill="#404040" stroke="#202020" stroke-width="0.5"/><circle cx="2" cy="4" r="1.5" fill="#40b0a0"/><rect x="4" y="1.5" width="1" height="6" fill="#909090"/></svg>
<svg class="a" style="left:478.5px;top:463px" width="8" height="10" viewBox="0 0 8 10"><rect x="2.5" y="0.5" width="3" height="2" fill="#806020"/><rect x="0.5" y="2.5" width="7" height="7" rx="1.5" fill="#d0b030" stroke="#605010" stroke-width="0.5"/></svg>
<div class="a" style="left:494px;top:461px;width:1px;height:10px;background:#b8b8c8"></div><div class="a" style="left:495px;top:461px;width:1px;height:10px;background:#ececf6"></div>
<svg class="a" style="left:499px;top:463px" width="11" height="10" viewBox="0 0 11 10"><rect x="0.5" y="2" width="10" height="6.5" rx="1" fill="#303030" stroke="#101010" stroke-width="0.5"/><circle cx="5.5" cy="5.3" r="2" fill="#e0e0e0"/><circle cx="5.5" cy="5.3" r="1" fill="#303030"/><rect x="2" y="1" width="2.5" height="1.5" fill="#505050"/></svg>
<div class="a" style="left:516px;top:461px;width:1px;height:10px;background:#b8b8c8"></div><div class="a" style="left:517px;top:461px;width:1px;height:10px;background:#ececf6"></div>
<svg class="a" style="left:521.5px;top:463px" width="10" height="10" viewBox="0 0 10 10"><circle cx="5" cy="5" r="4" fill="none" stroke="#c8c8d0" stroke-width="1.2"/><path d="M3,5 C4,3.5 6,3.5 7,5" stroke="#c8c8d0" stroke-width="0.8" fill="none"/></svg>
<svg class="a" style="left:534.5px;top:463px" width="10" height="10" viewBox="0 0 10 10"><circle cx="5" cy="5" r="4.3" fill="#2050a0"/><path d="M1.5,3 L5,1 L5,5 Z" fill="#fff"/><path d="M5,3 L5,9.5 L9,9.5 L9,5 Z" fill="#f0f0f0" stroke="#505050" stroke-width="0.4"/><path d="M2,6 L4,8" stroke="#40c080" stroke-width="0.8"/></svg>
<svg class="a" style="left:548px;top:463px" width="10" height="10" viewBox="0 0 10 10"><path d="M4.5,0.5 L4.5,6 L9.5,6 M4.5,6 L0.5,9.5" stroke="#303030" stroke-width="0.7" fill="none"/><circle cx="4.5" cy="0.8" r="0.7" fill="#303030"/></svg>
<svg class="a" style="left:560.5px;top:463px" width="10" height="10" viewBox="0 0 10 10"><text x="0" y="4.3" font-size="4.6" font-weight="bold" fill="#202080" font-family="Liberation Sans">10.1</text><text x="0" y="9" font-size="4.6" font-weight="bold" fill="#202080" font-family="Liberation Sans">10.0</text></svg>
<svg class="a" style="left:575px;top:463px" width="9" height="10" viewBox="0 0 9 10"><rect x="0.5" y="1.5" width="8" height="7.5" rx="3" fill="#40c8d0" stroke="#306070" stroke-width="0.7"/><ellipse cx="4.5" cy="2.2" rx="4" ry="1.5" fill="#80e0e8" stroke="#306070" stroke-width="0.5"/></svg>
<svg class="a" style="left:583.5px;top:472.5px" width="4" height="3" viewBox="0 0 4 3"><path d="M0,0.3 L4,0.3 L2,2.5 Z" fill="#000"/></svg>
<svg class="a" style="left:588.5px;top:463px" width="10" height="10" viewBox="0 0 10 10"><path d="M0.5,1 L3,1 M1,0.5 L1,3" stroke="#4060c0" stroke-width="0.7"/><path d="M4,2 L2,6 L6,5 L3,9.5" stroke="#e02020" stroke-width="1.2" fill="none"/><rect x="5.5" y="7" width="4" height="1.5" fill="#4060c0"/></svg>
<svg class="a" style="left:603.5px;top:463px" width="6" height="10" viewBox="0 0 6 10"><rect x="0.5" y="0.5" width="4.5" height="2.8" fill="#6080d8"/><rect x="0.5" y="3.8" width="4.5" height="2.5" fill="#90a8e0"/><rect x="0.5" y="6.8" width="4.5" height="2.5" fill="#6080d8"/></svg>
<svg class="a" style="left:610.5px;top:472.5px" width="4" height="3" viewBox="0 0 4 3"><path d="M0,0.3 L4,0.3 L2,2.5 Z" fill="#000"/></svg>
<svg class="a" style="left:615px;top:463px" width="10" height="10" viewBox="0 0 10 10"><path d="M0.5,5 L5,1 L9.5,4 L5,9 Z" fill="#d8e8f8" stroke="#2050a0" stroke-width="0.8"/><path d="M1,6.5 L5,9.5 L9.5,5" stroke="#2050a0" stroke-width="0.6" fill="none"/></svg>
<div class="cb" style="left:627px;top:463.5px;width:76px;height:9.5px;border-color:#909098 #e8e8f0 #e8e8f0 #909098"><b style="width:78px;top:1px;font-size:6.5px;transform:scaleX(0.87);transform-origin:0 0">Геометрический набор .1</b><i style="height:7.5px;background:#f0f0f4"></i></div>
<div class="a" style="left:709px;top:461px;width:1px;height:10px;background:#b8b8c8"></div><div class="a" style="left:710px;top:461px;width:1px;height:10px;background:#ececf6"></div>
<svg class="a" style="left:716px;top:463px" width="10" height="10" viewBox="0 0 10 10"><path d="M0.5,8.5 L5,4 L9.5,6 L5,9.5 Z" fill="#30a0b0" stroke="#205060" stroke-width="0.4"/><path d="M2,7 L8,2" stroke="#1a2a80" stroke-width="1.2"/><circle cx="8" cy="1.5" r="1.2" fill="#f0d040"/><path d="M6,5 L9,4" stroke="#e03030" stroke-width="0.8"/></svg>
<svg class="a" style="left:729px;top:463px" width="10" height="10" viewBox="0 0 10 10"><path d="M0.5,1 L9.5,0.5 L9,9.5 L1,9 Z" fill="#40a8c8" stroke="#1a3080" stroke-width="0.6"/><path d="M2,7 C3,3 5,2 8,2" stroke="#f0f0f0" stroke-width="1" fill="none"/><path d="M2,8 L8,8" stroke="#1a3080" stroke-width="0.6"/></svg>
<svg class="a" style="left:742px;top:463px" width="10" height="10" viewBox="0 0 10 10"><rect x="0.5" y="0.5" width="9" height="9" fill="#f0e8c8" stroke="#606060" stroke-width="0.5"/><circle cx="3" cy="3" r="1.8" fill="#4060a0"/><circle cx="7" cy="7" r="1.8" fill="#40a060"/><path d="M1,9 L9,1" stroke="#303030" stroke-width="0.6"/></svg>
<svg class="a" style="left:755px;top:463px" width="10" height="10" viewBox="0 0 10 10"><path d="M0.5,4 L9.5,1 L9.5,3.5 L0.5,6.5 Z" fill="#40a040"/><path d="M0.5,6.5 L9.5,3.5 L9.5,6 L0.5,9 Z" fill="#e0c030"/><path d="M0.5,2.5 L8,0.5" stroke="#c03030" stroke-width="0.8"/></svg>
<div class="a" style="left:771px;top:461px;width:1px;height:10px;background:#b8b8c8"></div><div class="a" style="left:772px;top:461px;width:1px;height:10px;background:#ececf6"></div>
<svg class="a" style="left:776px;top:463px" width="10" height="10" viewBox="0 0 10 10"><path d="M1,4 L5,1.5 L9.5,3 L8,9 L1,8.5 Z" fill="#e8e080" stroke="#404040" stroke-width="0.5"/><path d="M2,7 L8,3" stroke="#3060c0" stroke-width="1.2"/><circle cx="3" cy="6" r="1.3" fill="#40a0c0"/></svg>
<svg class="a" style="left:785px;top:472.5px" width="4" height="3" viewBox="0 0 4 3"><path d="M0,0.3 L4,0.3 L2,2.5 Z" fill="#000"/></svg>
<svg class="a" style="left:789.5px;top:463px" width="10" height="10" viewBox="0 0 10 10"><path d="M0.5,3 L4,0.5 L9.5,2.5 L9.5,6.5 L5,9.5 L0.5,7 Z" fill="#f0f0b0" stroke="#606060" stroke-width="0.5"/><path d="M1,5 L9,4" stroke="#3060c0" stroke-width="1"/><path d="M2,8 L8,6" stroke="#d0c040" stroke-width="1"/></svg>
<svg class="a" style="left:798.5px;top:472.5px" width="4" height="3" viewBox="0 0 4 3"><path d="M0,0.3 L4,0.3 L2,2.5 Z" fill="#000"/></svg>
<svg class="a" style="left:876px;top:458px" width="22" height="16" viewBox="0 0 22 16"><path d="M6.5,1.3 L10,1.3 C10.5,2.5 9.5,3.5 8.5,4" stroke="#e04848" stroke-width="1.2" fill="none"/><path d="M9,4.5 C11.5,5.5 12,8 10.5,9.8 C9.5,11 8,11.2 7.5,11.5" stroke="#e0c070" stroke-width="1.4" fill="none"/><path d="M2.5,12 C3,9 4.5,7 5.5,6.5 C7.5,6 8,7.5 6.5,9.5 C5.5,10.5 4,11.5 2.5,12 Z" fill="none" stroke="#4848b8" stroke-width="1.3"/><text x="5.3" y="15" font-size="3.9" font-style="italic" font-weight="bold" fill="#3838a0" font-family="Liberation Sans" textLength="14.5" lengthAdjust="spacingAndGlyphs">CATIA</text></svg>
<!-- status -->
<div class="t" style="left:1.8px;top:478.4px;color:#000;font-size:6.3px;transform:scaleX(0.89);transform-origin:0 0">Анализ угла уклона выбранного тела или поверхности</div>
<div class="t" style="left:683.3px;top:478.6px;color:#000;font-size:6.4px;transform:scaleX(0.855);transform-origin:0 0">«Анализ уклона»</div>
<div class="a" style="left:727.5px;top:477px;width:140.5px;height:9.5px;background:#fff;border-left:1px solid #a0a0b0;border-top:1px solid #8a8a94"></div>
<div class="a" style="left:869px;top:477px;width:14px;height:9.5px;background:#d8d8e6;border:1px solid #f0f0f8"></div>
<div class="a" style="left:885px;top:477px;width:14px;height:9.5px;background:#d8d8e6;border:1px solid #f0f0f8"></div>
<svg class="a" style="left:872px;top:478.5px" width="24" height="7" viewBox="0 0 24 7"><rect x="1.5" y="0.5" width="6" height="5.5" fill="none" stroke="#b8b8c8" stroke-width="0.6"/><path d="M4.5,0.5 L4.5,6" stroke="#b8b8c8" stroke-width="0.6"/><rect x="16" y="0.5" width="6" height="5.5" fill="none" stroke="#b8b8c8" stroke-width="0.6"/><path d="M16,3 L22,3" stroke="#b8b8c8" stroke-width="0.6"/></svg>
<div class="a" style="left:699px;top:473px;width:41.5px;height:9px;background:#ffffe1;border:0.7px solid #333"></div>
<div class="t" style="left:701.5px;top:475px;color:#111;font-size:5.6px;transform:scaleX(0.97);transform-origin:0 0">Анализ уклона</div>
<!-- taskbar -->
<svg class="a" style="left:6px;top:492px" width="10" height="10" viewBox="0 0 10 10"><path d="M0.5,1.6 L4.3,1.1 L4.3,4.7 L0.5,4.7 Z M4.9,1 L9.5,0.4 L9.5,4.7 L4.9,4.7 Z M0.5,5.3 L4.3,5.3 L4.3,8.9 L0.5,8.4 Z M4.9,5.3 L9.5,5.3 L9.5,9.6 L4.9,9 Z" fill="#fff"/></svg>
<svg class="a" style="left:28px;top:491px" width="12" height="12" viewBox="0 0 12 12"><circle cx="7" cy="4.7" r="3.6" fill="none" stroke="#fff" stroke-width="1"/><path d="M4.4,7.3 L0.8,11" stroke="#fff" stroke-width="1.1"/></svg>
<svg class="a" style="left:52px;top:493px" width="9" height="7.5" viewBox="0 0 9 7.5"><path d="M0.3,0.5 L6,0.5 M0.3,7 L6,7" stroke="#dde" stroke-width="0.8"/><rect x="1" y="2" width="4.2" height="3.5" fill="none" stroke="#dde" stroke-width="0.8"/><path d="M7.8,2 L7.8,7.5" stroke="#dde" stroke-width="0.9"/><circle cx="7.8" cy="0.8" r="0.6" fill="#dde"/></svg>
<svg class="a" style="left:74px;top:490.5px" width="13" height="13" viewBox="0 0 13 13"><circle cx="6.5" cy="6.5" r="6" fill="#db4437"/><path d="M6.5,6.5 L1.3,9.5 A6,6 0 0 0 9.5,11.7 Z" fill="#0f9d58"/><path d="M6.5,6.5 L12.5,6.5 A6,6 0 0 1 9.5,11.7 Z" fill="#f4c20d"/><path d="M6.5,6.5 L6.5,0.5 L12,4 A6,6 0 0 1 12.5,6.5 Z" fill="#db4437"/><circle cx="6.5" cy="6.5" r="2.8" fill="#fff"/><circle cx="6.5" cy="6.5" r="2.1" fill="#4285f4"/></svg>
<svg class="a" style="left:96.5px;top:491px" width="13" height="12" viewBox="0 0 13 12"><rect x="4" y="1.5" width="8.5" height="9" fill="#28a8ea"/><path d="M6,4 L12.5,4 L12.5,10 L6,10 Z" fill="#fff" opacity="0.9"/><path d="M6,4.5 L9.2,7 L12.5,4.5" stroke="#0a64ad" stroke-width="0.7" fill="none"/><rect x="0.5" y="0.5" width="7.5" height="11" fill="#0a64ad"/><circle cx="4.2" cy="6" r="2.2" fill="none" stroke="#fff" stroke-width="1.1"/></svg>
<div class="a" style="left:94px;top:504.5px;width:18px;height:1.5px;background:#8ab0d0"></div>
<svg class="a" style="left:120px;top:491.5px" width="11" height="9.5" viewBox="0 0 11 9.5"><path d="M2.5,0.5 L8,0.5 L8,3 L2.5,3 Z" fill="#d8d8d8"/><path d="M0.5,4 L10.5,4 L10.5,7 L0.5,7 Z" fill="#a8a8a8"/><path d="M1,3 L10,3 L10.5,4 L0.5,4 Z" fill="#c8c8c8"/><path d="M2,6.5 L9,6.5 L9.5,9 L1.5,9 Z" fill="#e8e8e8"/></svg>
<svg class="a" style="left:143px;top:491px" width="12" height="12" viewBox="0 0 12 12"><rect x="4" y="0.5" width="7.5" height="11" fill="#fff"/><path d="M5,3 L10.5,3 M5,5 L10.5,5 M5,7 L10.5,7 M5,9 L10.5,9" stroke="#2b579a" stroke-width="0.7"/><rect x="0.5" y="2" width="7" height="8" fill="#2b579a"/><text x="1.2" y="8.5" font-size="6" font-weight="bold" fill="#fff" font-family="Liberation Sans">W</text></svg>
<div class="a" style="left:140px;top:504.5px;width:18px;height:1.5px;background:#8ab0d0"></div>
<svg class="a" style="left:166px;top:491.5px" width="12" height="11" viewBox="0 0 12 11"><path d="M0.5,1.5 L4.5,1.5 L5.5,2.5 L11.5,2.5 L11.5,10.5 L0.5,10.5 Z" fill="#e8b830"/><rect x="0.5" y="4" width="11" height="6.5" fill="#f8d050"/><rect x="3" y="6.5" width="6" height="2.5" fill="#40a0b0"/></svg>
<div class="a" style="left:184.5px;top:487px;width:21px;height:19px;background:#3c474e"></div>
<svg class="a" style="left:188.5px;top:491px" width="12" height="12" viewBox="0 0 10 10"><rect x="0.3" y="0.3" width="9.4" height="9.4" fill="url(#cic)" stroke="#c8c8c8" stroke-width="0.5"/><rect x="0.5" y="0.5" width="9" height="9" fill="url(#cic2)"/></svg>
<div class="a" style="left:184.5px;top:504.5px;width:21px;height:1.5px;background:#8ab0d0"></div>
<svg class="a" style="left:795px;top:493px" width="8" height="5" viewBox="0 0 8 5"><path d="M0.8,4.5 L4,1.2 L7.2,4.5" stroke="#fff" stroke-width="0.7" fill="none"/></svg>
<svg class="a" style="left:806px;top:493px" width="9" height="8" viewBox="0 0 9 8"><rect x="2" y="0.5" width="6.5" height="5" fill="none" stroke="#fff" stroke-width="0.7"/><path d="M3.5,7.3 L7,7.3 M5.2,5.5 L5.2,7.3" stroke="#fff" stroke-width="0.6"/><path d="M0.6,1.5 L0.6,7.5" stroke="#fff" stroke-width="0.6"/></svg>
<svg class="a" style="left:817.5px;top:492.5px" width="9" height="9" viewBox="0 0 9 9"><path d="M0.5,3.2 L2.2,3.2 L4.3,1 L4.3,8 L2.2,5.8 L0.5,5.8 Z" fill="none" stroke="#fff" stroke-width="0.6"/><path d="M5.7,2.8 C6.5,3.8 6.5,5.2 5.7,6.2 M7.2,1.5 C8.5,3.2 8.5,5.8 7.2,7.5" stroke="#fff" stroke-width="0.6" fill="none"/></svg>
<div class="a" style="left:830.3px;top:493.3px;font-size:6.9px;line-height:1;color:#fff;white-space:nowrap;transform:scaleX(0.76);transform-origin:0 0">РУС</div>
<div class="a" style="left:853px;top:489.6px;font-size:6.9px;line-height:1;color:#fff;white-space:nowrap;transform:scaleX(0.78);transform-origin:0 0">18:47</div>
<div class="a" style="left:846.8px;top:496.9px;font-size:6.9px;line-height:1;color:#fff;white-space:nowrap;transform:scaleX(0.73);transform-origin:0 0">30.10.2024</div>
<svg class="a" style="left:880px;top:492px" width="14" height="12" viewBox="0 0 14 12"><path d="M0.8,0.8 L9.5,0.8 L9.5,6.8 L5,6.8 L2.8,9 L2.8,6.8 L0.8,6.8 Z" fill="#fff"/><path d="M2.5,2.8 L8,2.8 M2.5,4.6 L8,4.6" stroke="#1f2b32" stroke-width="0.6"/><circle cx="9.8" cy="7.6" r="3.9" fill="#2a353c" stroke="#9aa" stroke-width="0.4"/><text x="7.3" y="9.6" font-size="5.2" fill="#fff" font-family="Liberation Sans">21</text></svg>
<!--PART-->
<svg class="a" style="left:0;top:0" width="900" height="506" viewBox="0 0 900 506">
<defs>
<linearGradient id="pg" x1="0" y1="0" x2="0" y2="1">
<stop offset="0" stop-color="#b2b2da"/>
<stop offset="0.45" stop-color="#ababd3"/>
<stop offset="1" stop-color="#a5a5cc"/>
</linearGradient>
<linearGradient id="bandA" x1="0" y1="0" x2="0" y2="1"><stop offset="0" stop-color="#c4c4e6"/><stop offset="1" stop-color="#acacd4"/></linearGradient>
<linearGradient id="bandB" x1="0" y1="0" x2="0" y2="1"><stop offset="0" stop-color="#c0c0e6"/><stop offset="0.6" stop-color="#b4b4dc"/><stop offset="1" stop-color="#aeaed6"/></linearGradient>
<radialGradient id="hl1" cx="0.5" cy="0.5" r="0.5">
<stop offset="0" stop-color="#d0d0f0" stop-opacity="0.8"/>
<stop offset="1" stop-color="#d0d0f0" stop-opacity="0"/>
</radialGradient>
<clipPath id="pc"><path id="pp" d="M408.4,69.6 C410.4,71.1 416.3,75.5 420.7,78.6 C425.1,81.7 430.0,85.4 434.6,88.3 C439.2,91.2 443.8,93.6 448.4,95.9 C453.0,98.2 457.6,100.4 462.2,102.1 C466.8,103.8 472.0,105.0 476.1,106.3 C480.2,107.6 485.2,109.3 487.0,109.9 L493.8,119.8 L499.8,136.6 L503.7,139.5 L508.7,142.5 L511.6,146.4 L527.4,147.4 L528.4,171.1 L523.5,174.1 L519.5,181.0 L523.5,200.0 L546.2,250.0 L550.7,263.3 L555.3,271.5 L553.5,326.0 L476.7,325.8 L471.7,327.5 C470.6,328.6 467.5,332.2 465.0,334.2 C462.5,336.1 460.3,337.3 456.7,339.2 C453.1,341.1 448.3,343.2 443.3,345.8 C438.3,348.4 432.2,351.7 426.7,355.0 C421.1,358.3 413.8,363.2 410.0,365.8 C406.2,368.4 404.8,369.6 403.7,370.4 L357.8,368.9 L349.6,354.0 L354.8,344.4 L355.6,337.8 L353.3,334.0 L344.4,318.5 L343.0,314.8 L343.7,310.4 L345.9,307.4 L354.8,307.4 L356.5,300.0 L357.5,280.0 L358.3,240.0 L358.6,231.0 L353.8,224.6 L348.3,219.0 L346.2,213.5 L347.6,209.4 L353.1,203.8 L356.6,200.4 L360.7,198.3 L361.6,150.3 L370.0,151.6 L376.9,150.2 L397.0,145.4 L401.8,142.6 L403.9,139.2 L403.9,124.0 L402.5,118.4 L397.7,115.0 L383.8,110.8 L378.3,106.0 L374.1,101.1 L378.0,96.5 L386.6,94.2 Z"/></clipPath>
</defs>
<use href="#pp" fill="url(#pg)"/>
<g clip-path="url(#pc)">
<path d="M350,277 C380,270 410,264 455,261.5 L560,263 L560,281 L455,277.3 C410,281 380,287 350,294 Z" fill="url(#bandA)"/>
<path d="M350,294 C380,287 410,281 455,277.3 L560,280 L560,314 L476.7,313.3 C440,314.5 410,318.3 350,334 Z" fill="url(#bandB)"/>
<path d="M350,334 C410,318.3 440,314.5 476.7,313.3 L560,313 L560,319 L476.7,317.5 C440,319 410,323.3 350,339 Z" fill="#bcbce2"/>
<ellipse cx="400" cy="212" rx="25" ry="18" fill="url(#hl1)" opacity="0.5"/>
<ellipse cx="445" cy="98" rx="30" ry="10" fill="url(#hl1)" opacity="0.5"/>
<path d="M487.9,109.9 L494.3,119.8 L500.7,136.6 L503.7,139.5 L508,143 L521.5,183 L524,200 L519.5,200 L505.2,154 L500.7,147.5 L495.3,136.6 L490.3,125.7 L486.4,111.4 Z" fill="#8a8aa2"/><path d="M486.4,111.4 L490.3,125.7 L495.3,136.6 L500.7,147.5 L505.2,154 L519.5,200 L522,207" stroke="#1a1a30" stroke-width="1" fill="none"/><path d="M502,145 L521,196" stroke="#2a2a44" stroke-width="1.2" stroke-dasharray="0.7,0.8" fill="none"/><path d="M522,200 L547,257 L550,265" stroke="#1a1a30" stroke-width="0.8" fill="none"/><path d="M508.7,146 L527,147.2 L528,170.5 L523.5,173.5 L519,180.5 L510,150 Z" fill="#c4c4e4" stroke="#1a1a30" stroke-width="0.6"/><path d="M525,149.5 L525,170" stroke="#555570" stroke-width="1.6"/><path d="M503.7,139.5 L508.7,146 L511.6,146.4" stroke="#1a1a30" stroke-width="0.6" fill="none"/>
</g>
<path d="M399.9,79.9 C402.4,81.9 409.9,88.1 414.8,91.8 C419.8,95.5 424.7,99.2 429.6,102.2 C434.6,105.2 439.7,107.3 444.5,109.6 C449.3,111.9 453.5,114.3 458.3,116.0 C463.1,117.7 468.3,118.8 473.3,120.0 C478.3,121.2 486.0,122.4 488.5,122.9" stroke="#0a0a18" stroke-width="1.05" fill="none"/>
<path d="M399.0,81.9 C401.6,84.1 409.7,90.9 414.8,94.8 C419.9,98.7 424.7,102.2 429.6,105.2 C434.6,108.2 439.7,110.7 444.5,113.1 C449.3,115.5 453.5,117.7 458.3,119.5 C463.1,121.3 468.3,122.5 473.3,124.0 C478.3,125.5 486.0,127.8 488.5,128.5" stroke="#0a0a18" stroke-width="1.05" fill="none"/>
<path d="M458.3,116.0 C458.3,116.6 458.3,118.9 458.3,119.5" stroke="#0a0a18" stroke-width="0.6" fill="none"/>
<path d="M458.3,119.5 C461.9,122.4 472.6,130.8 480.0,137.0 C487.4,143.2 499.0,153.5 502.8,156.8" stroke="#0a0a18" stroke-width="1.05" fill="none"/>
<path d="M383.8,97.7 C386.1,99.5 394.0,105.5 397.7,108.7 C401.4,111.9 404.3,114.7 406.0,117.0 C407.7,119.3 407.7,118.7 408.0,122.6 C408.3,126.5 408.4,136.9 408.0,140.6 C407.6,144.3 406.8,143.7 405.3,144.7 C403.8,145.7 402.4,146.1 399.0,146.8 C395.6,147.5 391.2,148.1 385.0,149.0 C378.8,149.9 365.8,151.9 362.0,152.5" stroke="#0a0a18" stroke-width="0.7" fill="none"/>
<path d="M385.5,96.2 C387.8,98.0 395.8,104.1 399.5,107.3 C403.2,110.5 406.2,113.0 408.0,115.5 C409.8,118.0 409.8,117.8 410.2,122.0 C410.6,126.2 410.7,136.9 410.2,141.0 C409.7,145.1 408.8,145.2 407.0,146.5 C405.2,147.8 403.2,148.2 399.5,149.0 C395.8,149.8 391.2,150.5 385.0,151.5 C378.8,152.5 365.8,154.4 362.0,155.0" stroke="#0a0a18" stroke-width="0.5" fill="none"/>
<path d="M388.0,93.5 C390.3,95.3 397.4,100.7 401.8,104.6 C406.2,108.5 411.1,113.1 414.3,117.0 C417.5,120.9 419.4,124.2 421.2,128.1 C423.0,132.0 423.6,133.9 425.3,140.6 C427.0,147.3 429.8,160.1 431.1,168.2 C432.4,176.2 433.0,182.6 433.0,188.9 C433.0,195.2 432.8,200.8 431.1,205.8 C429.4,210.8 426.9,215.6 422.7,219.0 C418.5,222.4 412.4,225.1 405.8,226.5 C399.2,227.9 391.0,228.0 383.2,227.4 C375.4,226.8 362.9,223.5 358.8,222.7" stroke="#0a0a18" stroke-width="1.15" fill="none"/>
<path d="M390.0,92.5 C392.2,94.3 399.2,99.6 403.5,103.5 C407.8,107.4 412.8,112.0 416.0,116.0 C419.2,120.0 421.1,123.5 423.0,127.5 C424.9,131.5 425.6,133.2 427.3,140.0 C429.0,146.8 431.8,159.8 433.1,168.0 C434.4,176.2 435.0,182.6 435.0,189.0 C435.0,195.4 434.9,201.2 433.1,206.5 C431.4,211.8 428.9,216.8 424.5,220.5 C420.1,224.2 413.4,227.0 406.5,228.5 C399.6,230.0 391.1,230.0 383.2,229.4 C375.2,228.8 362.9,225.5 358.8,224.7" stroke="#dcdcf4" stroke-width="0.7" fill="none"/>
<path d="M417.7,126.7 C417.8,134.6 417.9,166.1 418.0,174.0" stroke="#0a0a18" stroke-width="0.6" fill="none"/>
<path d="M417.7,141.2 C418.8,141.2 423.4,141.2 424.5,141.2" stroke="#0a0a18" stroke-width="0.5" fill="none"/>
<path d="M361.6,174.8 C364.7,175.4 373.9,177.2 380.0,178.5 C386.1,179.8 393.0,182.0 398.2,182.3 C403.4,182.6 408.3,181.8 411.4,180.4 C414.5,179.0 416.1,174.9 417.0,173.8" stroke="#0a0a18" stroke-width="0.8" fill="none"/>
<path d="M361.6,177.6 C364.7,178.2 373.9,179.9 380.0,181.0 C386.1,182.1 392.6,184.0 398.2,184.2 C403.8,184.4 409.9,183.9 413.3,182.3 C416.8,180.7 418.0,176.1 418.9,174.8" stroke="#0a0a18" stroke-width="0.6" fill="none"/>
<path d="M398.2,183.2 C393.4,189.9 374.0,216.9 369.1,223.6" stroke="#0a0a18" stroke-width="0.7" fill="none"/>
<path d="M418.9,166.3 C420.9,168.0 429.1,175.0 431.1,176.7" stroke="#0a0a18" stroke-width="0.6" fill="none"/>
<path d="M433.0,185.1 C435.0,184.8 438.8,184.0 445.0,183.2 C451.2,182.3 461.7,181.3 470.0,180.0 C478.3,178.7 488.2,176.9 495.0,175.5 C501.8,174.1 508.1,172.3 510.7,171.7" stroke="#0a0a18" stroke-width="0.8" fill="none"/>
<path d="M358.2,277.3 C361.8,276.3 371.4,273.5 380.0,271.5 C388.6,269.5 397.5,267.2 410.0,265.5 C422.5,263.8 440.0,262.1 455.0,261.5 C470.0,260.9 484.1,261.7 500.0,262.0 C516.0,262.3 542.2,263.1 550.7,263.3" stroke="#0a0a18" stroke-width="1.05" fill="none"/>
<path d="M358.2,293.7 C361.8,292.7 371.4,289.5 380.0,287.5 C388.6,285.5 397.5,283.2 410.0,281.5 C422.5,279.8 440.0,277.9 455.0,277.3 C470.0,276.7 483.7,277.6 500.0,278.0 C516.3,278.4 544.2,279.4 553.0,279.7" stroke="#0a0a18" stroke-width="1.05" fill="none"/>
<path d="M355.6,333.3 C359.7,332.0 370.9,328.0 380.0,325.5 C389.1,323.0 400.0,320.1 410.0,318.3 C420.0,316.5 428.9,315.3 440.0,314.5 C451.1,313.7 458.1,313.6 476.7,313.3 C495.3,313.1 539.2,313.1 551.7,313.0" stroke="#0a0a18" stroke-width="1.05" fill="none"/>
<path d="M355.6,337.8 C359.7,336.5 370.9,332.4 380.0,330.0 C389.1,327.6 400.0,325.1 410.0,323.3 C420.0,321.5 428.9,320.0 440.0,319.0 C451.1,318.0 458.1,317.7 476.7,317.5 C495.3,317.3 539.2,317.9 551.7,318.0" stroke="#0a0a18" stroke-width="1.05" fill="none"/>
<path d="M361.6,150.3 C361.4,158.6 361.0,178.4 360.5,200.0 C360.0,221.6 359.1,256.7 358.5,280.0 C357.9,303.3 357.2,330.0 357.0,340.0" stroke="#20203a" stroke-width="0.6" fill="none"/>
<path d="M551.5,272.0 C551.4,281.0 550.9,317.0 550.8,326.0" stroke="#40406a" stroke-width="0.6" fill="none"/>
<circle cx="395.3" cy="167.6" r="7.4" fill="#a8a8d0" stroke="#1a1a30" stroke-width="0.9"/>
<circle cx="395.3" cy="167.6" r="6" fill="none" stroke="#1a1a30" stroke-width="0.8"/>
<circle cx="395.3" cy="167.6" r="4.6" fill="none" stroke="#2a2a48" stroke-width="0.6"/>
<circle cx="395.3" cy="167.6" r="3.4" fill="#d4d4f0" stroke="#1a1a30" stroke-width="0.8"/>
<ellipse cx="395" cy="168.1" rx="2" ry="1.7" fill="#4a4a78" stroke="#1a1a30" stroke-width="0.6"/>
<rect x="404.3" y="169.2" width="8.3" height="4.5" rx="0.8" fill="#5a5a88" stroke="#1a1a30" stroke-width="0.7"/>
<rect x="371.5" y="151" width="6.5" height="6.5" fill="#9898c0" stroke="#1a1a30" stroke-width="0.7"/><path d="M374.7,151 L374.7,157.5" stroke="#1a1a30" stroke-width="0.5"/>
<rect x="405.3" y="128.1" width="6.9" height="5.5" rx="1" fill="#4a4a78" stroke="#1a1a30" stroke-width="0.6"/>
<ellipse cx="378.3" cy="101.8" rx="2.3" ry="1.8" fill="#6a6a98" stroke="#101020" stroke-width="0.9"/>
<path d="M383.8,99 L383.8,110.8" stroke="#1a1a30" stroke-width="0.6"/>
<circle cx="347.8" cy="214.5" r="1" fill="#2a2a40"/><path d="M355,201 L355,228 M357,200 L357,230" stroke="#1a1a30" stroke-width="0.5"/><path d="M356,201 L356,229" stroke="#e0e0f8" stroke-width="0.6"/>
<path d="M345,307.6 L352.5,307.6 L353.5,310 L353.5,316.5 L350,318 L344.5,318 L343.2,315 L343.2,310 Z" fill="#b8b8dc" stroke="#101020" stroke-width="1"/>
<ellipse cx="346.3" cy="312" rx="2" ry="2.2" fill="#7a7aa0" stroke="#101020" stroke-width="0.9"/>
<path d="M349,318 L355.5,335 M351.5,318 L355.7,328" stroke="#101020" stroke-width="0.6" fill="none"/>
<path d="M354.8,307.4 L355.6,337.8" stroke="#1a1a30" stroke-width="0.5"/><path d="M350,309 L353.5,334" stroke="#eeeefa" stroke-width="0.5"/>
<path d="M407.5,71.5 L388.5,93" stroke="#e8e8fa" stroke-width="0.7"/>
<path d="M355,345 L350.2,354" stroke="#f0f0ff" stroke-width="0.6"/>

<use href="#pp" fill="none" stroke="#101020" stroke-width="1.1" stroke-linejoin="round"/>
</svg>
</body></html>
